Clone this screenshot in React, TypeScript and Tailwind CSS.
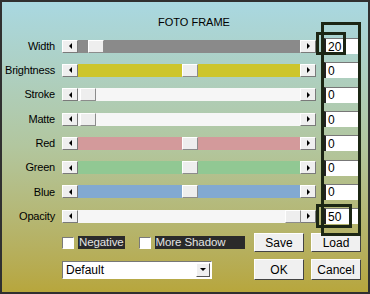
const ROWS = [
  { label: "Width", track: "bg-[#8a8a8a]", thumb: 10, value: "20" },
  { label: "Brightness", track: "bg-[#cdc52b]", thumb: 104, value: "0" },
  { label: "Stroke", track: "bg-[#f6f6f6]", thumb: 2, value: "0" },
  { label: "Matte", track: "bg-[#f6f6f6]", thumb: 2, value: "0" },
  { label: "Red", track: "bg-[#d39a9b]", thumb: 104, value: "0" },
  { label: "Green", track: "bg-[#91c893]", thumb: 104, value: "0" },
  { label: "Blue", track: "bg-[#82a9d1]", thumb: 104, value: "0" },
  { label: "Opacity", track: "bg-[#f6f6f6]", thumb: 207, value: "50" },
];

function ArrowButton({ dir }: { dir: "left" | "right" }) {
  return (
    <div className="flex h-[13px] w-[16px] shrink-0 items-center justify-center border border-t-white border-l-white border-b-[#7a7a7a] border-r-[#7a7a7a] bg-[#efefef]">
      {dir === "left" ? (
        <div className="h-0 w-0 border-y-[3px] border-r-[3px] border-y-transparent border-r-black" />
      ) : (
        <div className="h-0 w-0 border-y-[3px] border-l-[3px] border-y-transparent border-l-black" />
      )}
    </div>
  );
}

function Slider({ track, thumb }: { track: string; thumb: number }) {
  return (
    <div className="flex h-[13px] w-[254px] shrink-0">
      <ArrowButton dir="left" />
      <div className={`relative h-[13px] flex-1 ${track}`}>
        <div
          className="absolute top-0 h-[13px] w-[16px] border border-t-white border-l-white border-b-[#8c8c8c] border-r-[#8c8c8c] bg-[#eeeeee]"
          style={{ left: thumb }}
        />
      </div>
      <ArrowButton dir="right" />
    </div>
  );
}

function Check({ label, w }: { label: string; w: string }) {
  return (
    <div className="flex items-center gap-[4px]">
      <div className="h-[12px] w-[12px] border border-t-[#7a7a7a] border-l-[#7a7a7a] border-b-white border-r-white bg-white" />
      <span
        className={`flex h-[13px] items-center whitespace-nowrap bg-[#2a2a2a] px-[1px] text-[11.5px] leading-none tracking-[-0.1px] text-[#e4e4e4] ${w}`}
      >
        {label}
      </span>
    </div>
  );
}

function Button({ label, h }: { label: string; h: string }) {
  return (
    <div
      className={`flex w-[50px] items-center justify-center border border-t-white border-l-white border-b-[#444] border-r-[#444] bg-[#f0f0f0] text-[12px] text-black ${h}`}
    >
      {label}
    </div>
  );
}

export default function App() {
  return (
    <div className="relative h-[294px] w-[370px] overflow-hidden border-2 border-[#303030] bg-gradient-to-b from-[#a9d8e1] via-[#b2c69e] to-[#b7a63c] font-['Liberation_Sans',sans-serif] text-black">
      <div className="h-[32px] pl-[18px] pt-[13px] text-center text-[11px] leading-[14px]">FOTO FRAME</div>

      <div className="flex flex-col">
        {ROWS.map((r) => (
          <div key={r.label} className="flex h-[24.3px] items-center">
            <div className="w-[53px] shrink-0 text-right text-[11px] tracking-[-0.2px]">{r.label}</div>
            <div className="ml-[7px]">
              <Slider track={r.track} thumb={r.thumb} />
            </div>
            <div className="ml-[8px] flex h-[16px] w-[35px] items-center border-l-2 border-t border-l-[#222] border-t-[#777] bg-white pl-[2px] text-[12px] leading-none">
              {r.value}
            </div>
          </div>
        ))}
      </div>

      <div className="mt-[5px] ml-[60px] flex flex-col gap-[7px]">
        <div className="flex items-center">
          <div className="flex w-[192px] items-center">
            <Check label="Negative" w="min-w-[46px]" />
            <div className="ml-[14px]">
              <Check label="More Shadow" w="min-w-[90px]" />
            </div>
          </div>
          <div className="flex gap-[7px]">
            <Button label="Save" h="h-[19px]" />
            <Button label="Load" h="h-[19px]" />
          </div>
        </div>
        <div className="flex items-center">
          <div className="flex h-[18px] w-[150px] items-center border border-t-[#777] border-l-[#777] border-b-white border-r-white bg-white">
            <span className="flex-1 pl-[3px] text-[12px]">Default</span>
            <div className="mr-[1px] flex h-[14px] w-[14px] items-center justify-center border border-t-white border-l-white border-b-[#555] border-r-[#555] bg-[#efefef]">
              <div className="h-0 w-0 border-x-[3px] border-t-[3px] border-x-transparent border-t-black" />
            </div>
          </div>
          <div className="ml-[42px] flex gap-[7px]">
            <Button label="OK" h="h-[21px]" />
            <Button label="Cancel" h="h-[21px]" />
          </div>
        </div>
      </div>

      {/* highlight marks drawn over the value column */}
      <div className="pointer-events-none absolute left-[319px] top-[20px] h-[214px] w-[40px] border-[3px] border-[#1c2614]" />
      <div className="pointer-events-none absolute left-[314px] top-[30px] h-[23px] w-[30px] border-[3px] border-[#1c2614]" />
      <div className="pointer-events-none absolute left-[314px] top-[202px] h-[24px] w-[36px] border-[3px] border-[#1c2614]" />
    </div>
  );
}
